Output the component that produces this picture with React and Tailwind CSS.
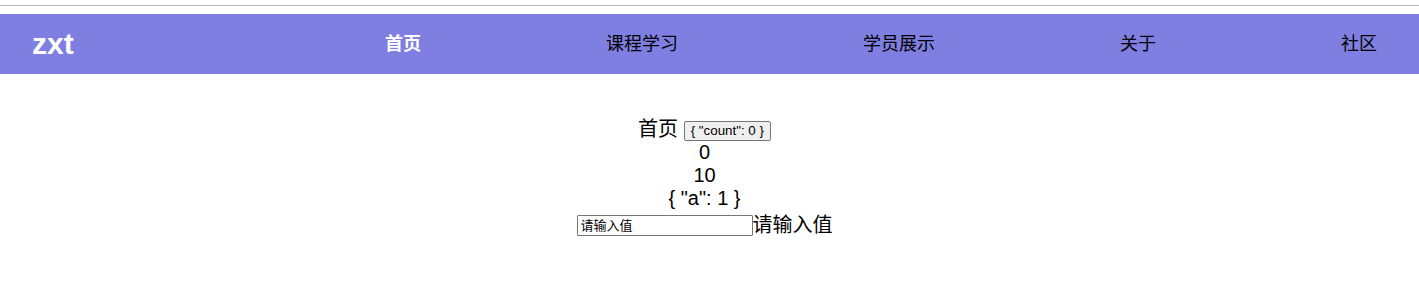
export default function App() {
  return (
    <div className="min-h-screen bg-white" style={{ fontFamily: '"Liberation Sans", "Noto Sans CJK SC", sans-serif' }}>
      <div className="pt-[5px]">
        <div className="h-px bg-[#b4b4b4]" />
      </div>

      {/* Header */}
      <nav className="mt-[8px] h-[60px] bg-[#7f7fe1] flex items-center">
        <div className="pl-[32px] text-[30px] font-bold text-white leading-none">zxt</div>
        <ul className="ml-auto mr-[42px] flex items-center gap-[185px] text-[18px] text-black">
          <li className="font-bold text-white">首页</li>
          <li>课程学习</li>
          <li>学员展示</li>
          <li>关于</li>
          <li>社区</li>
        </ul>
      </nav>

      {/* Content */}
      <main className="mt-[44px] pr-[10px] text-center text-[20px] leading-[23px] text-black">
        <div>
          首页{' '}
          <button className="align-middle px-[6px] h-[20px] text-[13.33px] leading-none bg-[#efefef] border border-[#767676] rounded-[2px]">
            {'{ "count": 0 }'}
          </button>
        </div>
        <div>0</div>
        <div>10</div>
        <div>{'{ "a": 1 }'}</div>
        <div className="mt-[4px] flex items-center justify-center">
          <input
            defaultValue="请输入值"
            className="w-[176px] h-[21px] px-[3px] text-[13px] border border-[#767676] rounded-[1px] outline-none"
          />
          <span>请输入值</span>
        </div>
      </main>
    </div>
  )
}
